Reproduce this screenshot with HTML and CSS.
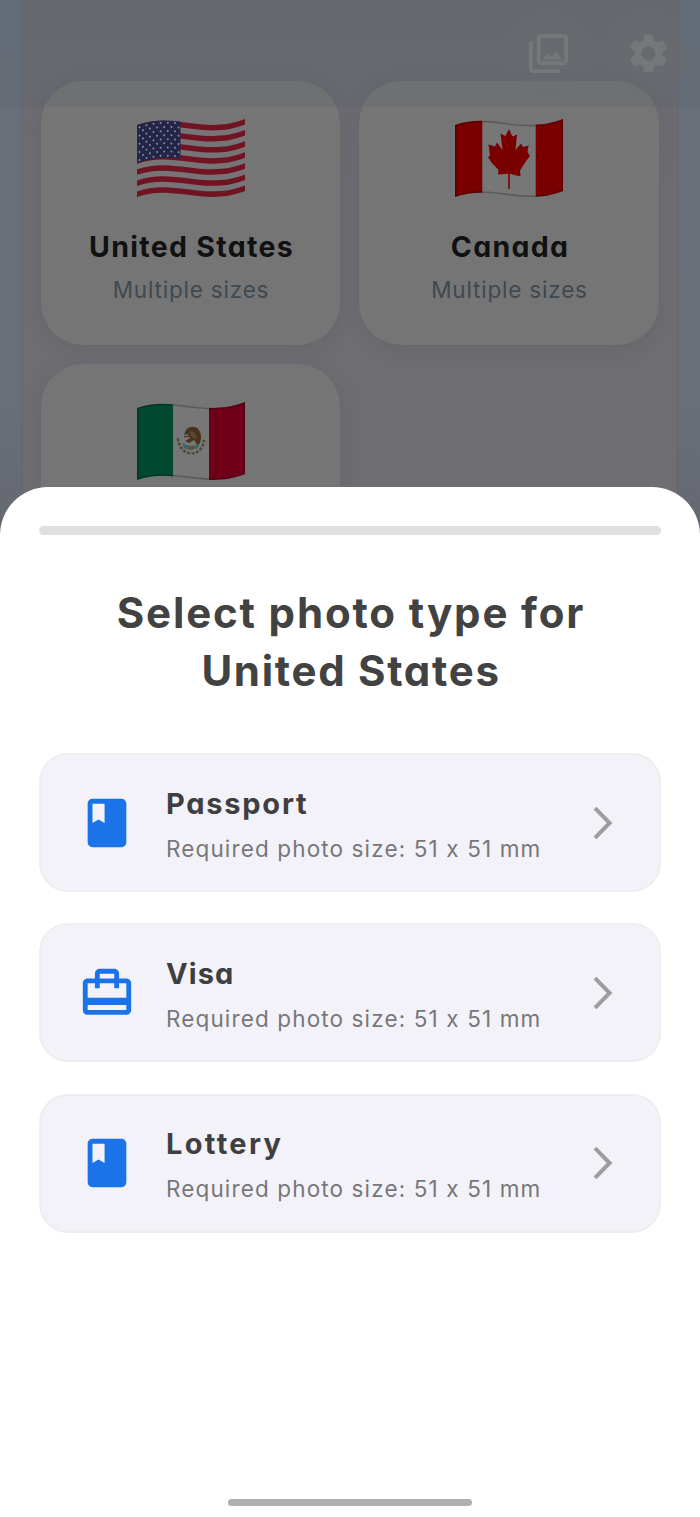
FILE: index.html
```html
<!DOCTYPE html>
<html lang="en">
<head>
<meta charset="utf-8">
<title>Select photo type</title>
<link rel="stylesheet" href="styles.css">
</head>
<body>
<svg class="defs" width="0" height="0">
  <defs>
    <path id="wave" d="M0 6C36 -7 68 16 108 0V72C68 88 36 65 0 78Z"/>
    <path id="stripe" d="M0 6C36 -7 68 16 108 0V5.54C68 21.54 36 -1.46 0 11.54Z"/>
    <path id="starline" d="M2.5 8.3C16 3.7 29 3 43 4.6"/>
    <clipPath id="flagclip"><use href="#wave"/></clipPath>
    <symbol id="book" viewBox="0 0 24 24"><path d="M18 2H6c-1.1 0-2 .9-2 2v16c0 1.1.9 2 2 2h12c1.1 0 2-.9 2-2V4c0-1.1-.9-2-2-2zM6 4h5v8l-2.5-1.5L6 12V4z"/></symbol>
    <symbol id="travel" viewBox="0 0 24 24"><path d="M20 6h-3V4c0-1.11-.89-2-2-2H9c-1.11 0-2 .89-2 2v2H4c-1.11 0-2 .89-2 2v11c0 1.11.89 2 2 2h16c1.11 0 2-.89 2-2V8c0-1.11-.89-2-2-2zM9 4h6v2H9V4zm11 15H4v-2h16v2zm0-5H4V8h3v2h2V8h6v2h2V8h3v6z"/></symbol>
    <symbol id="chevron" viewBox="0 0 20 34"><path d="M2 2.2L16.6 17 2 31.8" fill="none" stroke="#9d9d9f" stroke-width="4"/></symbol>
  </defs>
</svg>
<div class="screen">
  <main class="page">
    <div class="panel">
      <article class="country">
        <svg class="flag" viewBox="0 0 108 78">
          <use href="#wave" fill="#777478"/>
          <g fill="#701423">
            <use href="#stripe"/><use href="#stripe" y="11.08"/><use href="#stripe" y="22.16"/><use href="#stripe" y="33.24"/><use href="#stripe" y="44.32"/><use href="#stripe" y="55.4"/><use href="#stripe" y="66.46"/>
          </g>
          <path d="M0 6C15 .6 29 .8 43.5 2.6V39.5C29 38 15 39 0 44.5Z" fill="#25254a"/>
          <g fill="none" stroke="#8b8b9c" stroke-width="2" stroke-linecap="round" stroke-dasharray="0 7.2">
            <use href="#starline"/><use href="#starline" y="8.2"/><use href="#starline" y="16.4"/><use href="#starline" y="24.6"/><use href="#starline" y="32.8"/>
            <g stroke-dashoffset="-3.6"><use href="#starline" y="4.1"/><use href="#starline" y="12.3"/><use href="#starline" y="20.5"/><use href="#starline" y="28.7"/></g>
          </g>
        </svg>
        <h2 class="country-name">United States</h2>
        <p class="country-note">Multiple sizes</p>
      </article>
      <article class="country">
        <svg class="flag" viewBox="0 0 108 78">
          <g clip-path="url(#flagclip)">
            <path d="M0 0h108v78H0z" fill="#777"/>
            <path d="M0 0h27.3v78H0zM80.7 0H108v78H80.7z" fill="#7a0000"/>
            <use href="#wave" fill="none" stroke="#000" stroke-opacity=".25" stroke-width="3"/>
          </g>
          <path d="M54 10L57.3 17.5 62 15.5 60.5 31 66 24.5 68 28 73.5 26.5 72.5 33 75 37 71.5 41.5 65 51.5 65.5 57.5 54.8 54.8V70H53.2V54.8L43 55.5 43.5 51 36.5 43.5 33 38 35 36.5 33.5 25.5 40 27.5 42 23.5 47.5 31 45.5 14.5 50.5 17Z" fill="#7a0000"/>
        </svg>
        <h2 class="country-name">Canada</h2>
        <p class="country-note">Multiple sizes</p>
      </article>
      <article class="country">
        <svg class="flag" viewBox="0 0 108 78">
          <g clip-path="url(#flagclip)">
            <path d="M0 0h108v78H0z" fill="#777"/>
            <path d="M0 0h36v78H0z" fill="#00482f"/>
            <path d="M72 0h36v78H72z" fill="#70001a"/>
            <use href="#wave" fill="none" stroke="#000" stroke-opacity=".25" stroke-width="3"/>
          </g>
          <path d="M41 36C42 56 66 56 67 38" fill="none" stroke="#4f4c33" stroke-width="2.6" stroke-dasharray="3 1.5"/>
          <path d="M49 28c4-5 12-4 14 2 2 5 1 10-2 14l-4-6-5 3-4-2 5-3-2-4-4 1z" fill="#49331f"/>
          <path d="M52 29l5 1 3 5-2 2-4-3z" fill="#5c4930"/>
          <path d="M47 35l5-1" stroke="#30281e"/>
          <path d="M45 41q8 5 17 1l-1 4q-8 3-14 0z" fill="#37676d"/>
          <path d="M52 44h5l-1 4h-3z" fill="#655133"/>
        </svg>
      </article>
    </div>
  </main>
  <header class="appbar">
    <div class="round"><svg class="bar-icon" viewBox="0 0 24 24"><path d="M20 4v12H8V4h12m0-2H8c-1.1 0-2 .9-2 2v12c0 1.1.9 2 2 2h12c1.1 0 2-.9 2-2V4c0-1.1-.9-2-2-2zm-8.5 9.67l1.69 2.26 2.48-3.1L19 15H9zM2 6v14c0 1.1.9 2 2 2h14v-2H4V6H2z"/></svg></div>
    <div class="round"><svg class="bar-icon" viewBox="0 0 24 24"><path d="M19.14 12.94c.04-.3.06-.61.06-.94 0-.32-.02-.64-.07-.94l2.03-1.58c.18-.14.23-.41.12-.61l-1.92-3.32c-.12-.22-.37-.29-.59-.22l-2.39.96c-.5-.38-1.03-.7-1.62-.94l-.36-2.54c-.04-.24-.24-.41-.48-.41h-3.84c-.24 0-.43.17-.47.41l-.36 2.54c-.59.24-1.13.57-1.62.94l-2.39-.96c-.22-.08-.47 0-.59.22L2.74 8.87c-.12.21-.08.47.12.61l2.03 1.58c-.05.3-.09.63-.09.94s.02.64.07.94l-2.03 1.58c-.18.14-.23.41-.12.61l1.92 3.32c.12.22.37.29.59.22l2.39-.96c.5.38 1.03.7 1.62.94l.36 2.54c.05.24.24.41.48.41h3.84c.24 0 .44-.17.47-.41l.36-2.54c.59-.24 1.13-.56 1.62-.94l2.39.96c.22.08.47 0 .59-.22l1.92-3.32c.12-.22.07-.47-.12-.61l-2.01-1.58zM12 15.6c-1.98 0-3.6-1.62-3.6-3.6s1.62-3.6 3.6-3.6 3.6 1.62 3.6 3.6-1.62 3.6-3.6 3.6z"/></svg></div>
  </header>
  <section class="sheet">
    <div class="handle"></div>
    <h1 class="title"><span class="title-first">Select photo type for</span><br><span class="title-second">United States</span></h1>
    <div class="options">
      <div class="option">
        <svg class="option-icon"><use href="#book"/></svg>
        <div class="option-text"><h3 class="option-name name-passport">Passport</h3><p class="option-note">Required photo size: 51 x 51 mm</p></div>
        <svg class="chevron"><use href="#chevron"/></svg>
      </div>
      <div class="option">
        <svg class="option-icon"><use href="#travel"/></svg>
        <div class="option-text"><h3 class="option-name name-visa">Visa</h3><p class="option-note">Required photo size: 51 x 51 mm</p></div>
        <svg class="chevron"><use href="#chevron"/></svg>
      </div>
      <div class="option">
        <svg class="option-icon"><use href="#book"/></svg>
        <div class="option-text"><h3 class="option-name name-lottery">Lottery</h3><p class="option-note">Required photo size: 51 x 51 mm</p></div>
        <svg class="chevron"><use href="#chevron"/></svg>
      </div>
    </div>
    <div class="home"></div>
  </section>
</div>
</body>
</html>
```
FILE: styles.css
```css
* { box-sizing: border-box; }
body, h1, h2, h3, p { margin: 0; }
body { font-family: Inter, "Noto Sans", sans-serif; font-feature-settings: "cv11"; }
.defs { position: absolute; }
.screen { position: relative; width: 700px; height: 1517px; overflow: hidden; background: linear-gradient(#66707b 0, #696f79 150px, #696e78 400px, #656870 540px); }
.page { height: 487px; padding: 0 23px; }
.panel { height: 560px; padding: 81px 18px 0; display: grid; grid-template-columns: 299px 300px; grid-auto-rows: 264px; gap: 19px; background: linear-gradient(#6a6b71 0, #6d6d73 200px, #6e6d71 487px); box-shadow: 0 0 2px #555b68; }
.country { display: flex; flex-direction: column; align-items: center; padding-top: 38px; border-radius: 42px; background: #757575; box-shadow: 0 4px 16px rgba(80, 80, 88, .25); }
.flag { width: 108px; height: 78px; flex: none; }
.country-name { margin-top: 30px; padding-left: 2px; font-size: 28.5px; line-height: 40px; font-weight: 700; letter-spacing: 1.3px; color: #111; white-space: nowrap; }
.country-note { margin-top: 7px; padding-left: 1px; font-size: 22.5px; line-height: 32px; letter-spacing: .8px; color: #3e4952; white-space: nowrap; }
.appbar { position: absolute; top: 0; left: 0; width: 100%; height: 107px; padding: 11px 10px 0 0; display: flex; justify-content: flex-end; gap: 16px; background: rgba(90, 95, 103, .22); }
.round { width: 84px; height: 84px; flex: none; display: flex; align-items: center; justify-content: center; border-radius: 50%; background: rgba(109, 109, 112, .2); }
.bar-icon { width: 47px; height: 47px; fill: #76777a; }
.sheet { position: relative; height: 1030px; padding: 38.5px 39px 11px; display: flex; flex-direction: column; border-radius: 48px 48px 0 0; background: #fff; }
.handle { height: 9.5px; flex: none; border-radius: 5px; background: #dfdfdf; }
.title { margin-top: 48.5px; padding-left: 2px; font-size: 42px; line-height: 58.5px; font-weight: 700; color: #424242; text-align: center; white-space: nowrap; }
.title-first { letter-spacing: 1.85px; }
.title-second { letter-spacing: 1.7px; }
.options { margin-top: 52.5px; display: grid; gap: 31.3px; }
.option { height: 139px; padding: 0 46px 0 37px; display: flex; align-items: center; border: 2px solid #eeeef1; border-radius: 29px; background: #f3f2f9; }
.option-icon { width: 58px; height: 58px; margin-right: 30px; flex: none; fill: #1a73e8; }
.option-text { flex: 1; padding-top: 3px; }
.option-name { font-size: 29px; line-height: 40px; font-weight: 700; color: #3f3f41; }
.name-passport { letter-spacing: 1.75px; }
.name-visa { letter-spacing: 1.1px; }
.name-lottery { letter-spacing: 2.3px; }
.option-note { margin-top: 9px; font-size: 22.5px; line-height: 32px; letter-spacing: 1.13px; color: #77777b; white-space: nowrap; }
.chevron { width: 20px; height: 34px; flex: none; }
.home { width: 244px; height: 7px; margin: auto auto 0; border-radius: 4px; background: #b0b0b0; }
```
